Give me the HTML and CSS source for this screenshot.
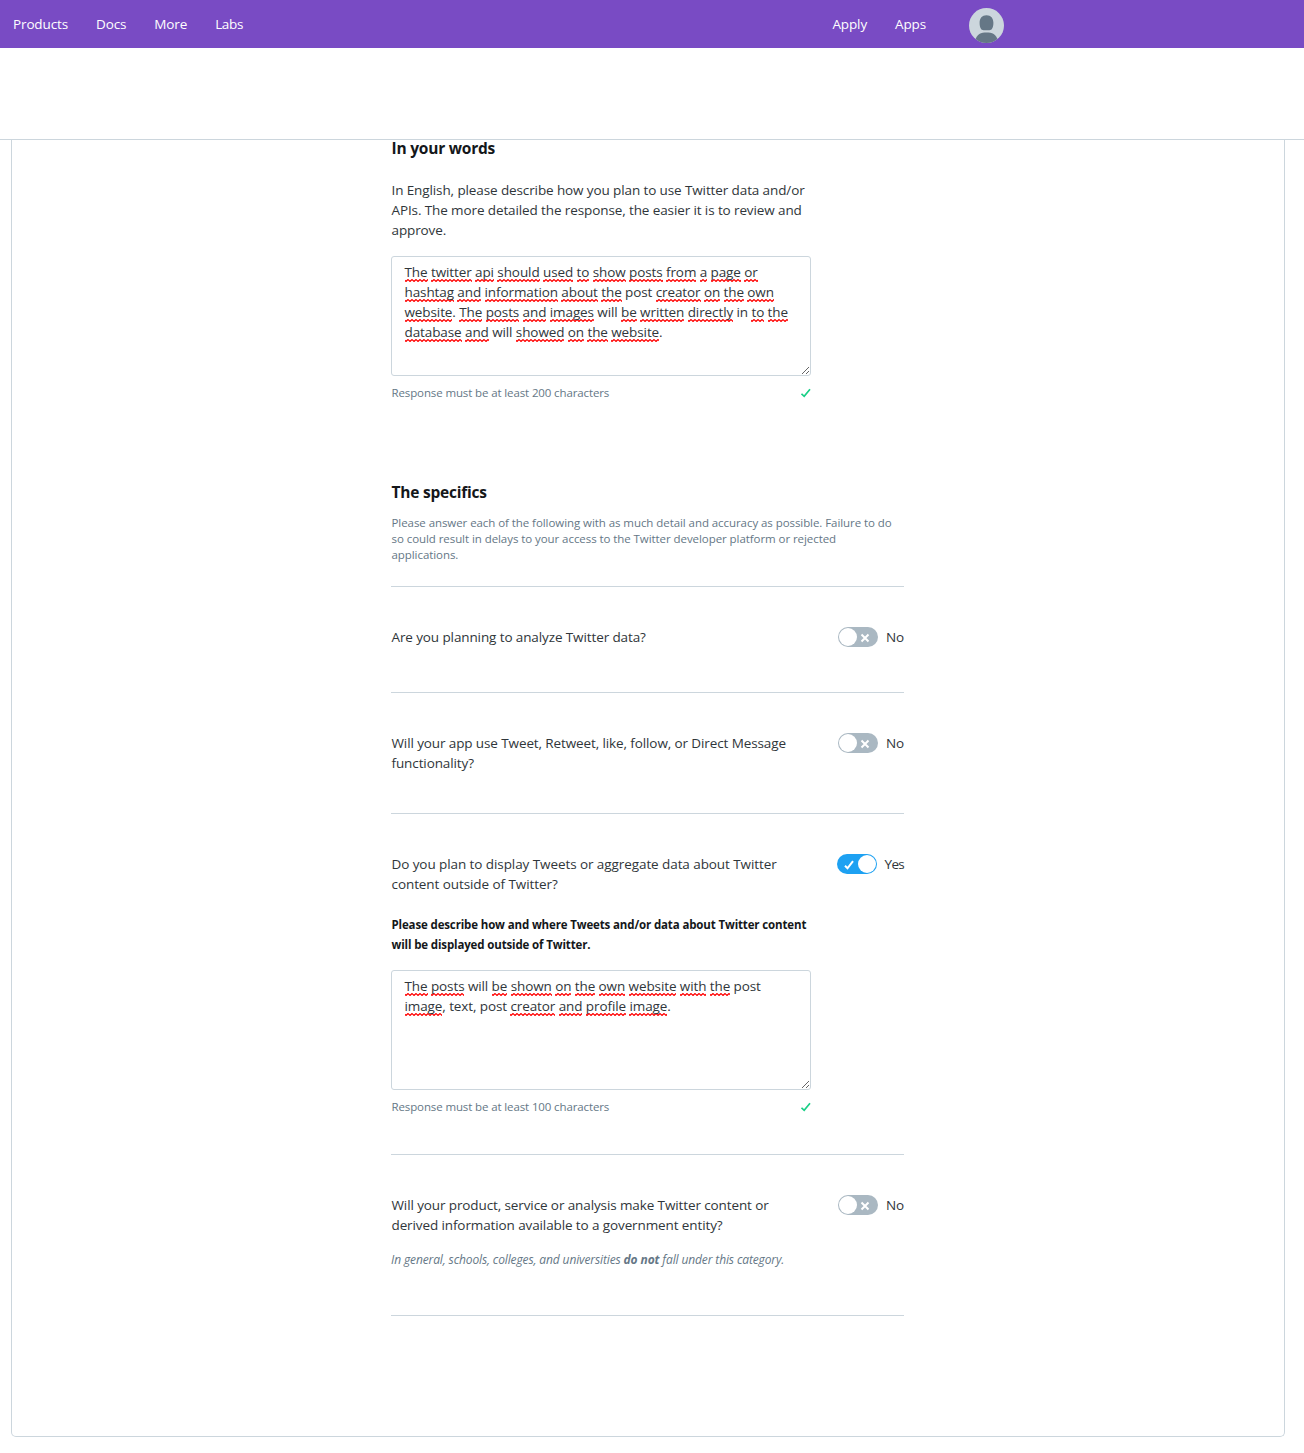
FILE: index.html
```html
<!DOCTYPE html>
<html lang="en">
<head>
<meta charset="utf-8">
<title>Developer application</title>
<link rel="stylesheet" href="styles.css">
</head>
<body>
<header class="topbar">
  <nav class="nav nav-main"><a>Products</a><a>Docs</a><a>More</a><a class="labs">Labs</a></nav>
  <nav class="nav nav-user"><a>Apply</a><a>Apps</a>
    <svg class="avatar" viewBox="0 0 35 35"><defs><clipPath id="round"><circle cx="17.5" cy="17.5" r="17.5"/></clipPath></defs><g clip-path="url(#round)"><rect width="35" height="35" fill="#ccd6dd"/><path d="M17.500 7.300c4.500 0 6.900 3 6.900 7.500 0 5-1.500 7.400-4 7.400h-5.800c-2.500 0-4-2.400-4-7.400 0-4.500 2.400-7.500 6.900-7.500z" fill="#657786"/><path d="M6 35c0-6.500 4.500-10.500 9.500-10.500h4c5 0 9.500 4 9.500 10.500z" fill="#657786"/></g></svg>
  </nav>
</header>
<div class="subheader"></div>
<main class="card">
  <div class="column">
    <h2 class="heading heading-first">In your words</h2>
    <p class="text intro">In English, please describe how you plan to use Twitter data and/or<br>APIs. The more detailed the response, the easier it is to review and<br>approve.</p>
    <div class="textarea"><u>The</u> <u>twitter</u> <u>api</u> <u>should</u> <u>used</u> <u>to</u> <u>show</u> <u>posts</u> <u>from</u> <u>a</u> <u>page</u> <u>or</u><br><u>hashtag</u> <u>and</u> <u>information</u> <u>about</u> <u>the</u> post <u>creator</u> <u>on</u> <u>the</u> <u>own</u><br><u>website</u>. <u>The</u> <u>posts</u> <u>and</u> <u>images</u> will <u>be</u> <u>written</u> <u>directly</u> in <u>to</u> <u>the</u><br><u>database</u> <u>and</u> will <u>showed</u> <u>on</u> <u>the</u> <u>website</u>.</div>
    <div class="hint"><span>Response must be at least 200 characters</span><svg class="check" viewBox="0 0 10 10"><path d="M.5 5.800L3.200 8.300L9 1.200"/></svg></div>
    <h2 class="heading specifics">The specifics</h2>
    <p class="small">Please answer each of the following with as much detail and accuracy as possible. Failure to do<br>so could result in delays to your access to the Twitter developer platform or rejected<br>applications.</p>

    <section class="question q-analyze">
      <div class="row"><p class="text">Are you planning to analyze Twitter data?</p>
        <div class="switch"><span class="track"><span class="knob"></span><svg class="cross" viewBox="0 0 10 10"><path d="M1.500 1.500L8.500 8.500M8.500 1.500L1.500 8.500"/></svg></span><span class="text">No</span></div></div>
    </section>
    <section class="question">
      <div class="row"><p class="text">Will your app use Tweet, Retweet, like, follow, or Direct Message<br>functionality?</p>
        <div class="switch"><span class="track"><span class="knob"></span><svg class="cross" viewBox="0 0 10 10"><path d="M1.500 1.500L8.500 8.500M8.500 1.500L1.500 8.500"/></svg></span><span class="text">No</span></div></div>
    </section>
    <section class="question q-display">
      <div class="row"><p class="text loose">Do you plan to display Tweets or aggregate data about Twitter<br>content outside of Twitter?</p>
        <div class="switch"><span class="track on"><svg class="tick" viewBox="0 0 10 10"><path d="M1 5.800L3.500 8.300L9 1.200"/></svg><span class="knob"></span></span><span class="text yes">Yes</span></div></div>
      <p class="label">Please describe how and where Tweets and/or data about Twitter content<br>will be displayed outside of Twitter.</p>
      <div class="textarea"><u>The</u> <u>posts</u> will <u>be</u> <u>shown</u> <u>on</u> <u>the</u> <u>own</u> <u>website</u> <u>with</u> <u>the</u> post<br><u>image</u>, text, post <u>creator</u> <u>and</u> <u>profile</u> <u>image</u>.</div>
      <div class="hint"><span>Response must be at least 100 characters</span><svg class="check" viewBox="0 0 10 10"><path d="M.5 5.800L3.200 8.300L9 1.200"/></svg></div>
    </section>
    <section class="question q-government">
      <div class="row"><p class="text">Will your product, service or analysis make Twitter content or<br>derived information available to a government entity?</p>
        <div class="switch"><span class="track"><span class="knob"></span><svg class="cross" viewBox="0 0 10 10"><path d="M1.500 1.500L8.500 8.500M8.500 1.500L1.500 8.500"/></svg></span><span class="text">No</span></div></div>
      <p class="note">In general, schools, colleges, and universities <strong>do not</strong> fall under this category.</p>
    </section>
  </div>
</main>
</body>
</html>
```
FILE: styles.css
```css
* { box-sizing: border-box; }
body {
  margin: 0;
  height: 1453px;
  overflow: hidden;
  background: #fff;
  color: #14171a;
  font-family: "Open Sans", sans-serif;
}
h2, p { margin: 0; }

.topbar {
  display: flex;
  height: 48px;
  padding-left: 13px;
  padding-right: 300px;
  justify-content: space-between;
  align-items: center;
  background: #794bc4;
  color: #fff;
  font-size: 13.5px;
  font-weight: 500;
  line-height: 20px;
  letter-spacing: -0.13px;
}
.nav { display: flex; align-items: center; gap: 28px; }
.labs { letter-spacing: -0.35px; }
.avatar { width: 35px; height: 35px; margin: 2px 0 0 15px; }
.subheader { height: 92px; border-bottom: 1px solid #ccd6dd; }

.card {
  height: 1297px;
  margin: 0 19px 0 11px;
  padding-left: 379px;
  border: 1px solid #ccd6dd;
  border-top: 0;
  border-radius: 0 0 5px 5px;
}
.column { width: 513px; }
.heading {
  padding-left: 0.5px;
  font-size: 15.5px;
  font-weight: 700;
  line-height: 20px;
  letter-spacing: -0.22px;
}
.heading-first { line-height: 16px; }
.specifics { margin-top: 81px; }
.text { font-size: 13.5px; line-height: 20px; letter-spacing: -0.11px; color: #30363a; }
p.text { padding-left: 0.5px; }
p.loose { letter-spacing: -0.08px; }
.intro { margin: 24px 0 16px; }

.textarea {
  width: 420px;
  height: 120px;
  padding: 5px 12px 5px 12.5px;
  border: 1px solid #ccd6dd;
  border-radius: 3px;
  overflow: auto;
  resize: both;
  font-size: 13.5px;
  line-height: 20px;
  letter-spacing: -0.1px;
  color: #30363a;
  white-space: nowrap;
}
.textarea u {
  padding-bottom: 1px;
  text-decoration: none;
  background: url("data:image/svg+xml,%3Csvg xmlns='http://www.w3.org/2000/svg' width='4' height='3'%3E%3Cpath d='M-1 .5L1 2.500L3 .5L5 2.500' fill='none' stroke='red' stroke-width='1.200'/%3E%3C/svg%3E") repeat-x left bottom;
}
.hint {
  display: flex;
  width: 420px;
  margin-top: 9px;
  padding-left: 0.5px;
  justify-content: space-between;
  align-items: center;
  font-size: 11.5px;
  line-height: 16px;
  letter-spacing: -0.12px;
  color: #657786;
}
.check { width: 10px; height: 10px; margin-right: 0.5px; fill: none; stroke: #19cf86; stroke-width: 1.7; }
.small {
  margin: 13px 0 23px;
  padding-left: 0.5px;
  font-size: 11.5px;
  line-height: 16px;
  letter-spacing: -0.066px;
  color: #657786;
  white-space: nowrap;
}

.question { padding: 40px 0; border-top: 1px solid #ccd6dd; }
.q-analyze { padding-bottom: 45px; }
.q-display { padding-bottom: 39px; }
.q-government { padding-bottom: 47px; border-bottom: 1px solid #ccd6dd; }
.row { display: flex; justify-content: space-between; align-items: flex-start; }
.switch { display: flex; gap: 8px; }
.yes { letter-spacing: -0.7px; }
.track {
  display: flex;
  width: 40px;
  height: 20px;
  padding: 1px 8px 1px 1px;
  justify-content: space-between;
  align-items: center;
  border-radius: 10px;
  background: #aab8c2;
}
.track.on { padding: 1px 1px 1px 7px; background: #1da1f2; }
.knob { width: 18px; height: 18px; border-radius: 50%; background: #fff; }
.cross { width: 10px; height: 10px; margin-top: 1px; fill: none; stroke: #fff; stroke-width: 2; }
.tick { width: 10px; height: 10px; margin-top: 2px; fill: none; stroke: #fff; stroke-width: 2; }
.label {
  margin: 21px 0 15px;
  padding-left: 0.5px;
  font-size: 11.5px;
  font-weight: 700;
  line-height: 20px;
  letter-spacing: -0.14px;
}
.note {
  margin-top: 17px;
  font-size: 12px;
  font-style: italic;
  line-height: 16px;
  letter-spacing: -0.12px;
  color: #657786;
}
```
